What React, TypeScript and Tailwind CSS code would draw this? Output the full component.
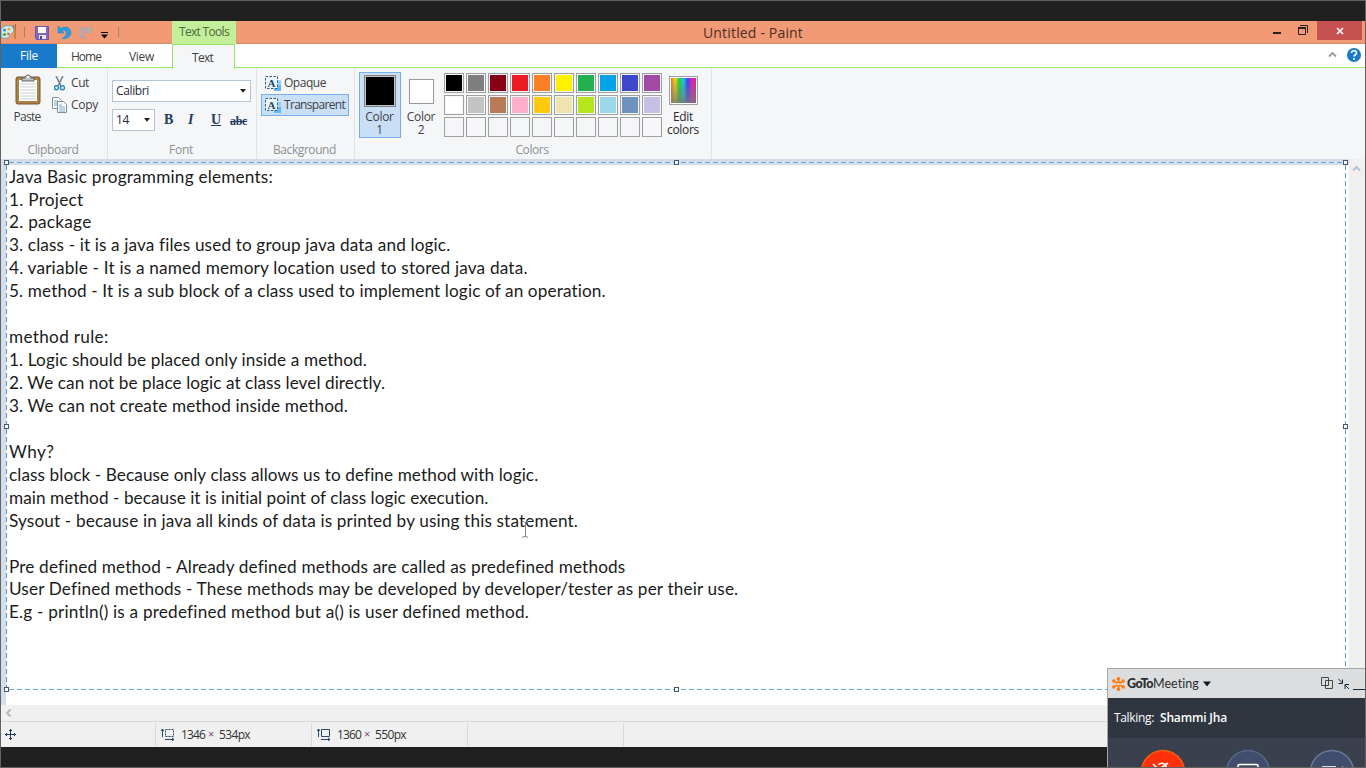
import React, { useLayoutEffect, useRef, useState } from "react";

/** A run of text whose tracking is adjusted so that it fills a given width. */
function Fit({ children, w, className = "" }: { children: string; w: number; className?: string }) {
  const ref = useRef<HTMLSpanElement>(null);
  const [spacing, setSpacing] = useState(0);
  useLayoutEffect(() => {
    if (ref.current) {
      setSpacing((w - ref.current.getBoundingClientRect().width) / children.length);
    }
  }, []);
  return (
    <span ref={ref} className={`inline-block whitespace-pre ${className}`} style={{ letterSpacing: `${spacing}px` }}>
      {children}
    </span>
  );
}

const lines: [string, number][] = [
  ["Java Basic programming elements:", 264],
  ["1. Project", 74.5],
  ["2. package", 82.5],
  ["3. class - it is a java files used to group java data and logic.", 441],
  ["4. variable - It is a named memory location used to stored java data.", 519],
  ["5. method - It is a sub block of a class used to implement logic of an operation.", 597],
  ["", 0],
  ["method rule:", 99.5],
  ["1. Logic should be placed only inside a method.", 358],
  ["2. We can not be place logic at class level directly.", 376],
  ["3. We can not create method inside method.", 339],
  ["", 0],
  ["Why?", 45.5],
  ["class block - Because only class allows us to define method with logic.", 529],
  ["main method - because it is initial point of class logic execution.", 480],
  ["Sysout - because in java all kinds of data is printed by using this statement.", 569],
  ["", 0],
  ["Pre defined method - Already defined methods are called as predefined methods", 615.5],
  ["User Defined methods - These methods may be developed by developer/tester as per their use.", 729],
  ["E.g - println() is a predefined method but a() is user defined method.", 519.5],
];

const swatches = [
  "bg-black", "bg-[#7f7f7f]", "bg-[#880015]", "bg-[#ed1c24]", "bg-[#ff7f27]", "bg-[#fff200]", "bg-[#22b14c]", "bg-[#00a2e8]", "bg-[#3f48cc]", "bg-[#a349a4]",
  "bg-white", "bg-[#c3c3c3]", "bg-[#b97a57]", "bg-[#ffaec9]", "bg-[#ffc90e]", "bg-[#efe4b0]", "bg-[#b5e61d]", "bg-[#99d9ea]", "bg-[#7092be]", "bg-[#c8bfe7]",
  "", "", "", "", "", "", "", "", "", "",
];

const handles = [
  "left-[3px] top-[159px]", "left-[673px] top-[159px]", "left-[1342px] top-[159px]",
  "left-[3px] top-[423px]", "left-[1342px] top-[423px]",
  "left-[3px] top-[686px]", "left-[673px] top-[686px]",
];

function QuickAccess() {
  return (
    <svg className="absolute -left-px top-0" width="124" height="23" viewBox="0 0 124 23">
      <path d="M1 8C4 3 14 3 14 9c0 3-3 3-4 6-2 3-7 3-9 1z" fill="#d5e8ea" stroke="#6f9b9b" />
      <circle cx="4.500" cy="9" r="1.500" fill="#3a8fd0" /><circle cx="9" cy="8" r="1.500" fill="#e8b52a" />
      <circle cx="4.500" cy="13.500" r="1.600" fill="#4ca548" /><circle cx="8.500" cy="13" r="1.300" fill="#d85a30" />
      <path d="M15 8v10" stroke="#c98232" strokeWidth="2" /><path d="M13.500 4v4M15.500 3v5" stroke="#8b6f4a" />
      <path d="M24.500 6v10M118.500 6v10" stroke="#a08076" />
      <path d="M35.500 5.500h13v13h-12l-1-1z" fill="#8069bd" stroke="#6c57a5" />
      <path d="M38 6h8v6h-8z" fill="#f7f7ff" /><path d="M39 14h7v4h-7z" fill="#e7e2f3" /><path d="M40 15h2v3h-2z" fill="#54428e" />
      <path d="M58 5v7h6L62 9.500c3-1 5 1 4 4-1 2-2 3-4 4 5 1 9-2 9-6 0-5-6-7-10-4z" fill="#2e9be0" stroke="#1c83c5" strokeWidth=".5" />
      <path d="M91.500 5v7h-6l2-2.500c-3-1-5 1-4 4 1 2 1 3 2 4-4 0-6-3-6-6 0-5 5-7 9-4z" fill="#b9aaac" stroke="#a99da2" strokeWidth=".5" />
      <path d="M101 11.500h7" stroke="#000" /><path d="M101 13.500h7l-3.500 4z" fill="#000" />
    </svg>
  );
}

function TextBoxIcon() {
  return (
    <svg width="17" height="15" viewBox="0 0 17 15" className="shrink-0">
      <path d="M9 8h7v7H9z" fill="#65b5fa" /><path d="M12 4h4v5h-4z" fill="#9bd0fb" />
      <path d="M.5.500h12v12H.5z" fill="#edf5fc" stroke="#365c86" strokeDasharray="2.500 1.500" />
      <text x="2.500" y="10.500" fontSize="11" fontWeight="bold" fontFamily="Liberation Serif, serif" fill="#23446b">A</text>
    </svg>
  );
}

function Caret() {
  return <svg width="6" height="4" viewBox="0 0 6 4" className="mr-[1px]"><path d="M0 0h6L3 3.800z" fill="#1e1e1e" /></svg>;
}

const caption = "absolute bottom-[1px] left-0 w-full pr-[2px] text-center text-[#8e9093]";

function Ribbon() {
  return (
    <div className="flex h-[91px] shrink-0 bg-[#f5f6f7] text-[12px] leading-[16px] text-[#3f3f46]">
      <section className="relative flex w-[107px] border-r border-[#e2e3e4] pt-[6px]">
        <div className="flex w-[52px] flex-col items-center">
          <svg width="26" height="32" viewBox="0 0 26 32" className="ml-[2px]">
            <rect x="1" y="3" width="24" height="27" rx="2" fill="#ad8046" stroke="#75562f" />
            <path d="M4 6h18v21H4z" fill="#fff" />
            <path d="M5 10h16M5 13h16M5 16h16M5 19h16M5 22h16M5 25h16" stroke="#cbd0d4" />
            <path d="M7 7V4h3c0-4 6-4 6 0h3v3z" fill="#bfc1c2" stroke="#626464" /><circle cx="13" cy="3" r="1" fill="#fff" />
          </svg>
          <Fit w={27} className="mt-[3px]">Paste</Fit>
        </div>
        <div className="flex flex-col gap-[6px]">
          <div className="flex h-4 items-center gap-[6px] pl-[1px] pt-[2px]">
            <svg width="11" height="15" viewBox="0 0 11 15"><path d="M2 0l5 10M9 0L4 10" stroke="#6d8292" strokeWidth="1.600" /><circle cx="2.500" cy="11.800" r="2" fill="none" stroke="#2d88bd" strokeWidth="1.500" /><circle cx="8.500" cy="11.800" r="2" fill="none" stroke="#2d88bd" strokeWidth="1.500" /></svg>
            <Fit w={18}>Cut</Fit>
          </div>
          <div className="-ml-px flex h-4 items-center gap-[4px] pt-[2px]">
            <svg width="15" height="16" viewBox="0 0 15 16"><path d="M.5.500h6l3 3v8h-9z" fill="#fff" stroke="#80919c" /><path d="M2 4h4M2 6h4M2 8h4" stroke="#79a9c6" /><path d="M5.500 4.500h6l3 3v8h-9z" fill="#fff" stroke="#80919c" /><path d="M7 8h3M7 10h6M7 12h6M7 14h6" stroke="#79a9c6" /></svg>
            <Fit w={27}>Copy</Fit>
          </div>
        </div>
        <div className={caption}><Fit w={51}>Clipboard</Fit></div>
      </section>

      <section className="relative flex w-[149px] flex-col gap-[7px] border-r border-[#e2e3e4] pl-[4px] pt-[12px]">
        <div className="flex h-[22px] w-[139px] items-center justify-between border border-[#b4c4da] bg-white px-[3px] text-[#1e2a3a]">
          <Fit w={33}>Calibri</Fit><Caret />
        </div>
        <div className="flex items-center">
          <div className="flex h-[22px] w-[43px] items-center justify-between border border-[#b4c4da] bg-white px-[3px] text-[#1e2a3a]">
            <Fit w={13}>14</Fit><Caret />
          </div>
          <div className="flex items-center font-['Liberation_Serif',serif] text-[14px] font-bold text-[#203a60]">
            <span className="ml-[9px] w-[24px]">B</span>
            <span className="w-[23px] italic">I</span>
            <span className="w-[19px] underline">U</span>
            <Fit w={17} className="pt-[1px] text-[12px] line-through">abc</Fit>
          </div>
        </div>
        <div className={caption}><Fit w={24}>Font</Fit></div>
      </section>

      <section className="relative w-[98px] border-r border-[#e2e3e4] pl-[4px] pt-[4px]">
        <div className="flex h-[22px] items-center gap-[2px] pl-[4px]"><TextBoxIcon /><Fit w={42}>Opaque</Fit></div>
        <div className="flex h-[22px] w-[88px] items-center gap-[2px] border border-[#78adeb] bg-[#c9dff6] pl-[3px]"><TextBoxIcon /><Fit w={61}>Transparent</Fit></div>
        <div className={caption}><Fit w={63}>Background</Fit></div>
      </section>

      <section className="relative flex w-[357px] border-r border-[#e2e3e4] pl-[4px] pt-[4px]">
        <div className="flex h-[66px] w-[42px] flex-col items-center border border-[#78adeb] bg-[#c9dff6] pt-[2px] leading-[13px]">
          <div className="h-[32px] w-[32px] border border-[#808080] bg-black shadow-[inset_0_0_0_1px_#b9c6d2]" />
          <p className="mt-[3px] w-[36px] pr-px text-center tracking-[-0.3px]">Color 1</p>
        </div>
        <div className="flex h-[66px] w-[41px] flex-col items-center pt-[7px] leading-[13px]">
          <div className="h-[25px] w-[25px] border border-[#999] bg-white" />
          <p className="mt-[6px] w-[36px] pr-px text-center tracking-[-0.3px]">Color 2</p>
        </div>
        <div className="ml-[2px] grid h-[66px] grid-cols-[repeat(10,20px)] content-start gap-[2px] pt-[1px]">
          {swatches.map((c, i) => (
            <div key={i} className="h-5 w-5 border border-[#a0a0a0] p-[1px]"><div className={`h-4 w-4 ${c}`} /></div>
          ))}
        </div>
        <div className="ml-[6px] flex w-[31px] flex-col items-center pt-[4px] leading-[13px] text-[#29292e]">
          <div className="h-[29px] w-[29px] border border-[#a0a0a0] bg-white p-[1px]">
            <div className="h-[25px] w-[25px] bg-[linear-gradient(to_bottom,transparent,#777c),linear-gradient(to_right,#f16b43,#eee000,#24cf38,#19c8e8,#383ef0,#e116db,#ef265c)]" />
          </div>
          <p className="-mr-px mt-[5px] w-[36px] pr-[2px] text-center tracking-[-0.3px]">Edit colors</p>
        </div>
        <div className={caption}><Fit w={33}>Colors</Fit></div>
      </section>
    </div>
  );
}

function Meeting() {
  return (
    <aside className="absolute left-[1107px] top-[668px] flex h-[100px] w-[259px] flex-col overflow-hidden border-l border-t border-[#a4a5a6] bg-[#3a404d] font-['Open_Sans','Noto_Sans',sans-serif]">
      <div className="flex h-[29px] shrink-0 items-center bg-[#dcddde] pl-[4px] pt-px">
        <svg width="13" height="14" viewBox="0 0 13 14">
          <g stroke="#ff7a12" strokeWidth="1.800" strokeLinecap="round"><path d="M6.500 1.500v11M1.500 4l10 6M11.500 4l-10 6" /></g>
          <g fill="#ff7a12"><circle cx="6.500" cy="1.800" r="1.800" /><circle cx="6.500" cy="12.200" r="1.800" /><circle cx="1.800" cy="4" r="1.700" /><circle cx="11.200" cy="4" r="1.700" /><circle cx="1.800" cy="10" r="1.700" /><circle cx="11.200" cy="10" r="1.700" /></g><circle cx="6.500" cy="7" r="1" fill="#fff2df" />
        </svg>
        <div className="ml-[2px] flex items-center font-[Lato,sans-serif] text-[12.500px] leading-[16px] text-[#2b2d30]"><Fit w={26} className="font-black">GoTo</Fit><Fit w={46}>Meeting</Fit></div>
        <svg width="8" height="6" viewBox="0 0 8 6" className="ml-[4px]"><path d="M0 .5h8L4 5.500z" fill="#15181c" /></svg>
        <svg width="47" height="16" viewBox="0 0 47 16" className="ml-auto mr-0" fill="none" stroke="#44484d">
          <path d="M2.500 1.500h7v8h-7zM6.500 4.500h7v8h-7z" />
          <path d="M19.500 3l4 4M23.500 3.500v4h-4M30 13l-4-4M26 13V8.500h4" stroke="#172c43" /><path d="M34 13.500h12" stroke="#172c43" />
        </svg>
      </div>
      <div className="flex h-[40px] shrink-0 items-center bg-[#2f3640] pl-[6px] text-[12px] text-white"><Fit w={40}>Talking:</Fit><Fit w={67} className="ml-[6px] font-semibold">Shammi Jha</Fit></div>
      <svg width="258" height="30" viewBox="0 0 258 30" fill="none" className="shrink-0">
        <g strokeWidth="1.500"><circle cx="55" cy="34" r="21.500" fill="#ff3108" stroke="#f06015" /><circle cx="140" cy="34" r="21.500" fill="#414d6c" stroke="#586889" /><circle cx="224" cy="34" r="21.500" fill="#414d6c" stroke="#687998" /></g>
        <g stroke="#fff" strokeWidth="1.700"><path d="M45 26l10 10M50.500 27c1-2 6-3 7.500 1v3M53 30l7-5" /><path d="M130 32V28q0-1.500 1.500-1.500h17q1.500 0 1.500 1.500v4" /></g>
        <path d="M214 28h14v4h-14zM231 31l4-3v4z" fill="#dce0e9" />
      </svg>
    </aside>
  );
}

export default function App() {
  return (
    <main className="relative flex h-[768px] w-[1366px] flex-col overflow-hidden border border-[#626262] bg-[#202020] pt-[20px] font-['Open_Sans','Noto_Sans',sans-serif]">
      <header className="relative h-[23px] shrink-0 border-b border-[#db8969] bg-[#f29a76]">
        <QuickAccess />
        <div className="absolute left-[171px] top-0 h-[23px] w-[64px] bg-[#c3ef9b] text-center text-[12px] leading-[21px] text-[#4d6839]"><Fit w={50}>Text Tools</Fit></div>
        <div className="pl-[702px] text-[14px] leading-[24px] text-[#4b3028]"><Fit w={100}>Untitled - Paint</Fit></div>
        <svg className="absolute right-[49px] top-[3px]" width="46" height="14" viewBox="0 0 46 14"><path d="M3 8h8v2H3z" fill="#28201e" /><path d="M28.500 3.500h7v7h-7zM30 1.500h7.500V9" fill="none" stroke="#28201e" /><path d="M28 3h8v2h-8z" fill="#28201e" /></svg>
        <div className="absolute right-[3px] top-0 flex h-[19px] w-[45px] items-center justify-center bg-[#c75050]"><svg width="8" height="8" viewBox="0 0 8 8"><path d="M1 1l6 6M7 1L1 7" stroke="#fff" strokeWidth="1.600" /></svg></div>
      </header>
      <nav className="flex h-[24px] shrink-0 bg-white text-[12px] leading-[25px] text-[#3f3f42]">
        <div className="w-[56px] bg-[#1979ca] text-center leading-[24px] text-white"><Fit w={18}>File</Fit></div>
        <div className="flex grow border-b border-[#92e862]"><Fit w={30} className="ml-[14px]">Home</Fit><Fit w={25} className="ml-[28px]">View</Fit></div>
        <div className="absolute left-[171px] top-[43px] h-[25px] w-[63px] border-x border-t border-[#92e862] bg-[#f5f6f7] pr-[2px] text-center"><Fit w={21}>Text</Fit></div>
        <svg className="absolute right-[4px] top-[45px]" width="34" height="18" viewBox="0 0 34 18"><path d="M2 10.500L5.500 7 9 10.500" fill="none" stroke="#999" strokeWidth="1.800" /><circle cx="27" cy="9" r="7" fill="#1979ca" /><path d="M24.500 7c0-3 5-3 5 0 0 2-2.500 2-2.500 3.500M27 12v2" fill="none" stroke="#fff" strokeWidth="1.600" /></svg>
      </nav>
      <Ribbon />

      <div className="flex h-[546px] shrink-0">
        <div className="grow border-l-[5px] border-t-[6px] border-l-[#d3deed] border-t-[#d5dce8] bg-white pl-[3px] pt-[0.600px] font-[Lato,sans-serif] text-[17.200px] leading-[22.940px] text-[#1b1b1b]">
          {lines.map(([t, w], i) => <div key={i} className="h-[22.940px]">{t && <Fit w={w}>{t}</Fit>}</div>)}
        </div>
        <div className="w-[16px] bg-[#f0f0f0] pt-[5px]"><svg width="16" height="8" viewBox="0 0 16 8"><path d="M4 6.500L7.500 3 11 6.500" fill="none" stroke="#adbed0" strokeWidth="1.800" /></svg></div>
      </div>
      <div className="flex h-[16px] shrink-0 items-center bg-[#f0f0f0] pl-[4px]"><svg width="7" height="8" viewBox="0 0 7 8"><path d="M5.500.500L2 4l3.500 3.500" fill="none" stroke="#b5b5b5" strokeWidth="1.800" /></svg></div>
      <footer className="flex h-[26px] shrink-0 items-center border-t border-[#d9d9d9] bg-[#f0f0f0] text-[12px] text-[#333]">
        <div className="flex h-[23px] w-[155px] items-center border-r border-[#d9d9d9] pl-[4px]"><svg width="11" height="11" viewBox="0 0 11 11" fill="none" stroke="#203a60"><path d="M0 5.500h11M5.500 0v11M1.500 4v3M9.500 4v3M4 1.500h3M4 9.500h3" /></svg></div>
        {[{ a: "1346", b: "534px", d: "2 1" }, { a: "1360", b: "550px", d: "none" }].map((s) => (
          <div key={s.a} className="flex h-[23px] w-[156px] items-center border-r border-[#d9d9d9] pl-[5px]">
            <svg width="14" height="13" viewBox="0 0 14 13" fill="none" stroke="#294568"><path d="M4.500 1.500h8v7h-8z" strokeDasharray={s.d} /><path d="M1.500 1v8M0 3l1.500-2L3 3M4 11.500h9M11 10l2 1.500-2 1.500" /></svg>
            <Fit w={24} className="ml-[6px]">{s.a}</Fit><Fit w={6} className="mx-[3px] text-[11px] text-[#754876]">×</Fit><Fit w={31} className="ml-[2px]">{s.b}</Fit>
          </div>
        ))}
        <div className="h-[23px] w-[156px] border-r border-[#d9d9d9]" />
      </footer>

      <div className="absolute left-[8px] top-[161px] h-px w-[1334px] bg-[repeating-linear-gradient(to_right,#62a8ef_0_5px,#e8f0fa_5px_8px)]" />
      <div className="absolute left-[8px] top-[688px] h-px w-[1336px] bg-[repeating-linear-gradient(to_right,#62a8ef_0_5px,#fff_5px_8px)]" />
      <div className="absolute left-[5px] top-[164px] h-[523px] w-px bg-[repeating-linear-gradient(to_bottom,#5c8fc5_0_5px,#fff_5px_8px)]" />
      <div className="absolute left-[1344px] top-[164px] h-[523px] w-px bg-[repeating-linear-gradient(to_bottom,#5c9be1_0_5px,#fff_5px_8px)]" />
      {handles.map((h) => <div key={h} className={`absolute h-[5px] w-[5px] border border-[#415670] bg-white ${h}`} />)}
      <svg className="absolute left-[520px] top-[520px]" width="9" height="17" viewBox="0 0 9 17"><path d="M1 .5h2l1 1 1-1h2M4.500 1v14M1 16h2l1-1 1 1h2" fill="none" stroke="#888" /></svg>
      <div className="absolute -left-px -top-px"><Meeting /></div>
    </main>
  );
}
